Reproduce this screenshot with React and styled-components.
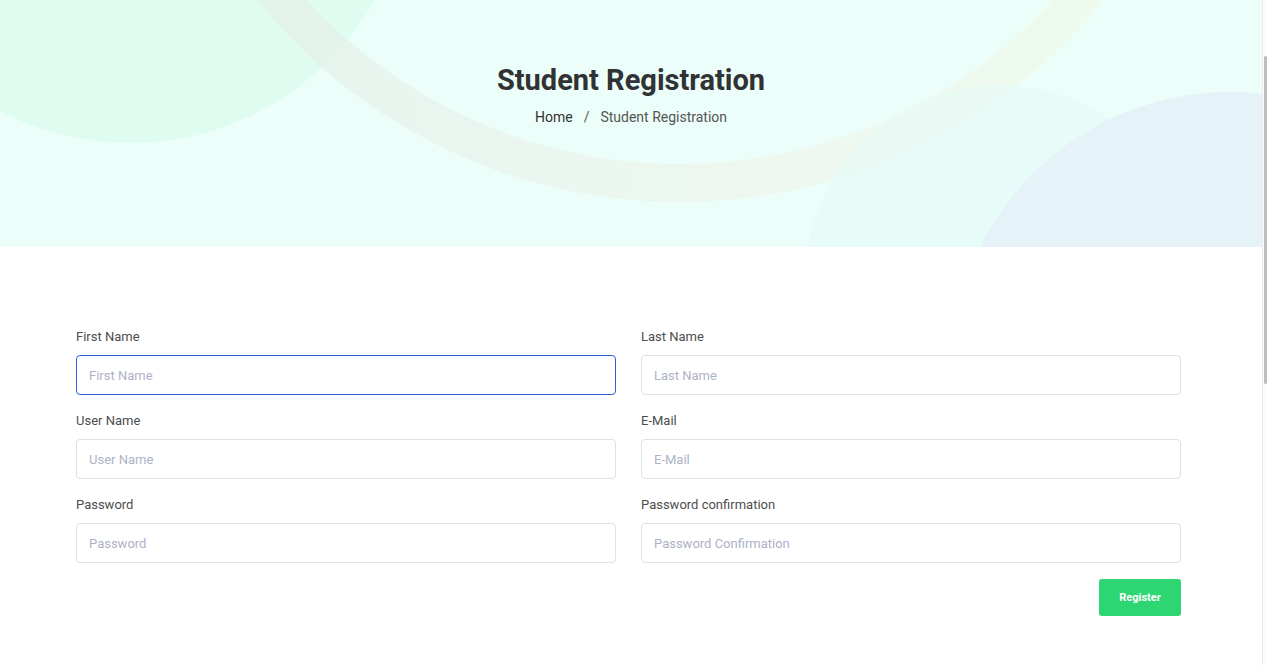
import React from "react";
import styled, { createGlobalStyle } from "styled-components";

const Global = createGlobalStyle`
  body { margin: 0; font-family: Roboto, "Liberation Sans", sans-serif; background: #fff; }
  * { box-sizing: border-box; }
`;

const Page = styled.div`
  min-height: 1300px;
  margin-right: 5px;
  background: #fff;
`;

const ScrollRail = styled.div`
  position: fixed;
  top: 0;
  right: 0;
  width: 5px;
  height: 100vh;
  background: #fbfbfb;
  border-left: 1px solid #ececec;
`;

const ScrollThumb = styled.div`
  position: absolute;
  top: 56px;
  left: 1px;
  width: 3px;
  height: 328px;
  border-radius: 2px;
  background: #bdbdbd;
`;

const Hero = styled.header`
  position: relative;
  height: 247px;
  background: #ecfef9;
  overflow: hidden;
  display: flex;
  flex-direction: column;
  align-items: center;
  padding-top: 62px;
`;

const Decor = styled.svg`
  position: absolute;
  inset: 0;
  width: 100%;
  height: 100%;
`;

const Title = styled.h1`
  position: relative;
  margin: 0;
  font-family: Roboto, "Liberation Sans", sans-serif;
  font-weight: 700;
  font-size: 29px;
  line-height: 36px;
  color: #303234;
`;

const Crumbs = styled.nav`
  position: relative;
  margin-top: 10px;
  display: flex;
  gap: 11px;
  font-size: 14px;
  line-height: 18px;
  color: #555;
`;

const Crumb = styled.span`
  color: ${(p) => (p.$home ? "#333" : "#555")};
`;

const Section = styled.section`
  padding: 80px 81px 0 76px;
`;

const FormGrid = styled.form`
  display: grid;
  grid-template-columns: 1fr 1fr;
  column-gap: 25px;
  row-gap: 16px;
`;

const Field = styled.div`
  display: flex;
  flex-direction: column;
`;

const Label = styled.label`
  font-size: 13px;
  line-height: 20px;
  color: #4d4d4d;
  margin-bottom: 8px;
`;

const Input = styled.input`
  height: 40px;
  width: 100%;
  border: 1px solid #dfe0e8;
  border-radius: 4px;
  padding: 0 12px;
  font-family: Roboto, "Liberation Sans", sans-serif;
  font-size: 13px;
  color: #333;
  outline: none;
  background: #fff;
  &::placeholder { color: #aeb2c8; }
  &:focus { border-color: #2c5fd8; }
`;

const Actions = styled.div`
  grid-column: 1 / -1;
  display: flex;
  justify-content: flex-end;
`;

const Button = styled.button`
  width: 82px;
  height: 37px;
  border: none;
  border-radius: 3px;
  background: #2ed573;
  color: #fff;
  font-family: Roboto, "Liberation Sans", sans-serif;
  font-weight: 700;
  font-size: 11px;
  cursor: pointer;
`;

const fields = [
  ["First Name", "First Name", "text"],
  ["Last Name", "Last Name", "text"],
  ["User Name", "User Name", "text"],
  ["E-Mail", "E-Mail", "email"],
  ["Password", "Password", "password"],
  ["Password confirmation", "Password Confirmation", "password"],
];

export default function App() {
  return (
    <Page>
      <Global />
      <Hero>
        <Decor viewBox="0 0 1262 247" preserveAspectRatio="none">
          <defs>
            <linearGradient id="ring" x1="0" y1="0" x2="1" y2="0">
              <stop offset="0" stopColor="#e3efe9" stopOpacity="0.7" />
              <stop offset="0.6" stopColor="#eef6ee" stopOpacity="0.8" />
              <stop offset="1" stopColor="#eefbe9" stopOpacity="0.8" />
            </linearGradient>
          </defs>
          <circle cx="130" cy="-138" r="281" fill="#dcfcef" opacity="0.85" />
          <circle cx="680" cy="-343" r="526" fill="none" stroke="url(#ring)" strokeWidth="38" />
          <circle cx="1000" cy="280" r="195" fill="#e3fbf8" opacity="0.45" />
          <circle cx="1230" cy="371" r="279" fill="#e5f2f8" />
        </Decor>
        <Title>Student Registration</Title>
        <Crumbs>
          <Crumb $home>Home</Crumb>
          <Crumb>/</Crumb>
          <Crumb>Student Registration</Crumb>
        </Crumbs>
      </Hero>
      <Section>
        <FormGrid onSubmit={(e) => e.preventDefault()}>
          {fields.map(([label, ph, type], i) => (
            <Field key={label}>
              <Label>{label}</Label>
              <Input type={type} placeholder={ph} autoFocus={i === 0} />
            </Field>
          ))}
          <Actions>
            <Button type="submit">Register</Button>
          </Actions>
        </FormGrid>
      </Section>
      <ScrollRail>
        <ScrollThumb />
      </ScrollRail>
    </Page>
  );
}
